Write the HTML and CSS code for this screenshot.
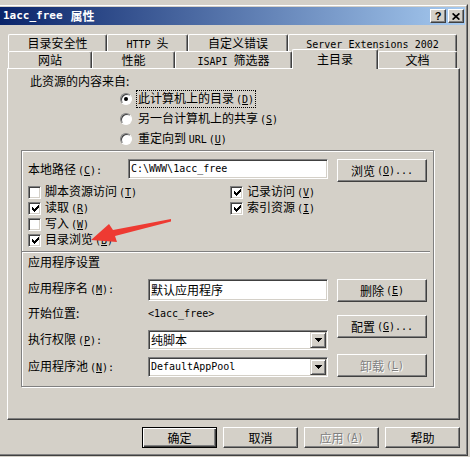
FILE: index.html
```html
<!DOCTYPE html>
<html lang="zh-CN">
<head>
<meta charset="utf-8">
<title>1acc_free 属性</title>
<link rel="stylesheet" href="styles.css">
</head>
<body>
<div class="window">
 <div class="win-in">
  <div class="titlebar">
   <div class="title"><span class="tt">1acc_free</span><span class="tcn">属性</span></div>
   <div class="tbtns">
    <div class="tbtn q">?</div>
    <div class="tbtn x"><svg width="8" height="7" viewBox="0 0 8 7"><path d="M0.6 0.4 L7.4 6.6 M7.4 0.4 L0.6 6.6" stroke="#000" stroke-width="1.7" fill="none"/></svg></div>
   </div>
  </div>

  <div class="tabs">
   <div class="tabrow back">
    <div class="tab t-sec">目录安全性</div>
    <div class="tab t-http"><span class="en">HTTP </span>头</div>
    <div class="tab t-err">自定义错误</div>
    <div class="tab t-ext"><span class="en">Server Extensions 2002</span></div>
   </div>
   <div class="tabrow front">
    <div class="tab t-site">网站</div>
    <div class="tab t-perf">性能</div>
    <div class="tab t-isapi"><span class="en">ISAPI </span>筛选器</div>
    <div class="tab t-home sel">主目录</div>
    <div class="tab t-doc">文档</div>
   </div>
  </div>

  <div class="panel">
   <div class="src">此资源的内容来自:</div>
   <div class="rrow"><span class="radio on"></span><span class="rl focus">此计算机上的目录<span class="k">(<u>D</u>)</span></span></div>
   <div class="rrow"><span class="radio"></span><span class="rl">另一台计算机上的共享<span class="k">(<u>S</u>)</span></span></div>
   <div class="rrow"><span class="radio"></span><span class="rl">重定向到 <span class="en">URL</span><span class="k">(<u>U</u>)</span></span></div>

   <div class="frame">
    <div class="pathrow">
     <div class="plbl">本地路径<span class="k">(<u>C</u>):</span></div>
     <div class="edit pedit"><span class="en">C:\WWW\1acc_free</span></div>
     <div class="btn pbtn">浏览<span class="k">(<u>O</u>)...</span></div>
    </div>

    <div class="checks">
     <div class="chk"><span class="cb"></span><span>脚本资源访问<span class="k">(<u>T</u>)</span></span></div>
     <div class="chk"><span class="cb"><svg width="7" height="7" viewBox="0 0 7 7" shape-rendering="crispEdges"><path d="M0 2h1v3H0zM1 3h1v3H1zM2 4h1v3H2zM3 3h1v3H3zM4 2h1v3H4zM5 1h1v3H5zM6 0h1v3H6z" fill="#000"/></svg></span><span>记录访问<span class="k">(<u>V</u>)</span></span></div>
     <div class="chk"><span class="cb"><svg width="7" height="7" viewBox="0 0 7 7" shape-rendering="crispEdges"><path d="M0 2h1v3H0zM1 3h1v3H1zM2 4h1v3H2zM3 3h1v3H3zM4 2h1v3H4zM5 1h1v3H5zM6 0h1v3H6z" fill="#000"/></svg></span><span>读取<span class="k">(<u>R</u>)</span></span></div>
     <div class="chk"><span class="cb"><svg width="7" height="7" viewBox="0 0 7 7" shape-rendering="crispEdges"><path d="M0 2h1v3H0zM1 3h1v3H1zM2 4h1v3H2zM3 3h1v3H3zM4 2h1v3H4zM5 1h1v3H5zM6 0h1v3H6z" fill="#000"/></svg></span><span>索引资源<span class="k">(<u>I</u>)</span></span></div>
     <div class="chk"><span class="cb"></span><span>写入<span class="k">(<u>W</u>)</span></span></div>
     <div class="chk"></div>
     <div class="chk"><span class="cb"><svg width="7" height="7" viewBox="0 0 7 7" shape-rendering="crispEdges"><path d="M0 2h1v3H0zM1 3h1v3H1zM2 4h1v3H2zM3 3h1v3H3zM4 2h1v3H4zM5 1h1v3H5zM6 0h1v3H6z" fill="#000"/></svg></span><span>目录浏览<span class="k">(<u>B</u>)</span></span></div>
     <div class="chk"></div>
    </div>

    <div class="sep"></div>
    <div class="sect">应用程序设置</div>

    <div class="app">
     <div class="appl">
      <div class="arow ra">
       <div class="albl">应用程序名<span class="k">(<u>M</u>):</span></div>
       <div class="edit aedit">默认应用程序</div>
      </div>
      <div class="arow rb">
       <div class="albl">开始位置:</div>
       <div class="aval"><span class="en">&lt;1acc_free&gt;</span></div>
      </div>
      <div class="arow rc">
       <div class="albl">执行权限<span class="k">(<u>P</u>):</span></div>
       <div class="edit sel-box"><span class="sv">纯脚本</span><span class="dd"><svg width="7" height="4" viewBox="0 0 7 4" shape-rendering="crispEdges"><path d="M0 0h7L3.5 4z" fill="#000"/></svg></span></div>
      </div>
      <div class="arow rd">
       <div class="albl">应用程序池<span class="k">(<u>N</u>):</span></div>
       <div class="edit sel-box"><span class="sv en">DefaultAppPool</span><span class="dd"><svg width="7" height="4" viewBox="0 0 7 4" shape-rendering="crispEdges"><path d="M0 0h7L3.5 4z" fill="#000"/></svg></span></div>
      </div>
     </div>
     <div class="appr">
      <div class="btn b-del">删除<span class="k">(<u>E</u>)</span></div>
      <div class="btn b-cfg">配置<span class="k">(<u>G</u>)...</span></div>
      <div class="btn b-unl dis">卸载<span class="k">(<u>L</u>)</span></div>
     </div>
    </div>
   </div>
  </div>

  <div class="dlgbtns">
   <div class="btn dbtn def">确定</div>
   <div class="btn dbtn">取消</div>
   <div class="btn dbtn dis">应用<span class="k">(<u>A</u>)</span></div>
   <div class="btn dbtn">帮助</div>
  </div>
 </div>
</div>

<svg class="arrow" width="470" height="457" viewBox="0 0 470 457">
 <polygon points="91,240 109,224 113,230 171,219 171,221.5 115,236 117,242" fill="#ee3a32"/>
</svg>
</body>
</html>
```

FILE: styles.css
```css
* { box-sizing: border-box; }
html, body { margin: 0; padding: 0; }
body {
  width: 470px;
  height: 457px;
  overflow: hidden;
  position: relative;
  background: #d4d0c8;
  font-family: "Noto Sans CJK SC", "Noto Sans", sans-serif;
  font-size: 12px;
  line-height: 16px;
  color: #000;
}
.en { font-family: "DejaVu Sans Mono", "Liberation Mono", monospace; font-size: 10px; }
.k { font-family: "DejaVu Sans Mono", "Liberation Mono", monospace; font-size: 10px; margin-left: 2px; }
u { text-decoration: underline; text-underline-offset: 1px; }

.window {
  margin: 4px 0 0 -3px;
  width: 471px;
  height: 452px;
  border: 1px solid;
  border-color: #d4d0c8 #404040 #404040 #d4d0c8;
}
.win-in {
  height: 100%;
  border: 1px solid;
  border-color: #fff #808080 #808080 #fff;
  padding: 1px;
  display: flex;
  flex-direction: column;
}

/* title bar */
.titlebar {
  height: 18px;
  flex: none;
  background: linear-gradient(to right, #0a246a, #a6caf0);
  display: flex;
  align-items: center;
  justify-content: space-between;
  padding: 0 1px 0 3px;
  color: #fff;
  font-weight: bold;
}
.title { display: flex; align-items: center; }
.tt { font-family: "DejaVu Sans Mono", "Liberation Mono", monospace; font-size: 11px; font-weight: bold; }
.tcn { margin-left: 8px; }
.tbtns { display: flex; gap: 2px; }
.tbtn {
  width: 16px;
  height: 14px;
  background: #d4d0c8;
  border: 1px solid;
  border-color: #fff #404040 #404040 #fff;
  box-shadow: inset -1px -1px 0 #808080;
  display: flex;
  align-items: center;
  justify-content: center;
  color: #000;
}
.tbtn.q { font-family: "Liberation Sans", sans-serif; font-size: 11px; font-weight: bold; line-height: 12px; }

/* tabs */
.tabs { margin: 9px 0 0 8px; width: 449px; flex: none; }
.tabrow { display: flex; height: 17px; }
.tabrow.front { align-items: flex-end; }
.tab {
  height: 17px;
  border-top: 1px solid #fff;
  border-left: 1px solid #fff;
  border-right: 1px solid #404040;
  box-shadow: inset -1px 0 0 #808080;
  border-radius: 2px 2px 0 0;
  background: #d4d0c8;
  text-align: center;
  line-height: 16px;
  white-space: nowrap;
}
.t-sec { width: 99px; }
.t-http { width: 81px; }
.t-err { width: 100px; }
.t-ext { width: 169px; }
.t-site { width: 84px; }
.t-perf { width: 83px; }
.t-isapi { width: 117px; }
.t-home { width: 86px; }
.t-doc { width: 79px; }
.tab.sel {
  height: 20px;
  margin-bottom: -1px;
  position: relative;
  z-index: 1;
  line-height: 17px;
}

/* panel */
.panel {
  flex: none;
  margin-left: 7px;
  width: 453px;
  height: 352px;
  border: 1px solid;
  border-color: #fff #404040 #404040 #fff;
  box-shadow: inset -1px -1px 0 #808080;
  padding: 4px 0 0 13px;
}
.src { margin-left: 9px; height: 16px; }
.rrow { height: 20px; display: flex; align-items: center; margin-left: 99px; }
.radio {
  width: 12px;
  height: 12px;
  border-radius: 50%;
  background: #fff;
  border: 1px solid;
  border-color: #808080 #fff #fff #808080;
  box-shadow: inset 1px 1px 0 #404040;
  margin-right: 4px;
  display: flex;
  align-items: center;
  justify-content: center;
}
.radio.on::after {
  content: "";
  width: 4px;
  height: 4px;
  border-radius: 50%;
  background: #000;
}
.rl { border: 1px solid transparent; line-height: 14px; padding: 0 1px; white-space: nowrap; }
.rl.focus { border: 1px dotted #000; }

.frame {
  margin-top: 1px;
  width: 413px;
  height: 237px;
  border: 1px solid #808080;
  box-shadow: 1px 1px 0 #fff, inset 1px 1px 0 #fff;
  padding: 8px 0 0 6px;
}
.pathrow { display: flex; height: 23px; align-items: flex-start; }
.plbl { width: 100px; line-height: 20px; white-space: nowrap; }
.edit {
  background: #fff;
  border: 1px solid;
  border-color: #808080 #fff #fff #808080;
  box-shadow: inset 1px 1px 0 #404040, inset -1px -1px 0 #d4d0c8;
  display: flex;
  align-items: center;
  padding-left: 2px;
  white-space: nowrap;
}
.pedit { width: 200px; height: 20px; }

.btn {
  background: #d4d0c8;
  border: 1px solid;
  border-color: #fff #404040 #404040 #fff;
  box-shadow: inset -1px -1px 0 #808080;
  display: flex;
  align-items: center;
  justify-content: center;
  white-space: nowrap;
}
.pbtn { width: 90px; height: 23px; margin-left: 9px; }
.btn.dis { color: #808080; text-shadow: 1px 1px 0 #fff; }

.checks {
  margin-top: 2px;
  display: grid;
  grid-template-columns: 202px 190px;
  grid-auto-rows: 16px;
}
.chk { display: flex; align-items: center; white-space: nowrap; }
.cb {
  width: 13px;
  height: 13px;
  flex: none;
  background: #fff;
  border: 1px solid;
  border-color: #808080 #fff #fff #808080;
  box-shadow: inset 1px 1px 0 #404040, inset -1px -1px 0 #d4d0c8;
  margin-right: 4px;
  display: flex;
  align-items: center;
  justify-content: center;
}
.cb svg { display: block; margin: 1px 0 0 1px; }

.sep {
  margin: 3px 0 0 -6px;
  width: 408px;
  height: 2px;
  border-top: 1px solid #808080;
  border-bottom: 1px solid #fff;
}
.sect { margin-top: 1px; height: 16px; }

.app { display: flex; }
.appl { width: 300px; }
.arow { display: flex; align-items: center; }
.albl { width: 120px; white-space: nowrap; }
.ra { margin-top: 9px; height: 22px; align-items: flex-start; }
.ra .albl { line-height: 18px; }
.aedit { width: 180px; height: 22px; }
.rb { margin-top: 4px; height: 16px; }
.rc { margin-top: 9px; height: 20px; }
.rd { margin-top: 7px; height: 20px; }
.sel-box { width: 180px; height: 20px; padding: 1px 1px 1px 2px; justify-content: space-between; }
.dd {
  width: 16px;
  height: 16px;
  background: #d4d0c8;
  border: 1px solid;
  border-color: #d4d0c8 #404040 #404040 #d4d0c8;
  box-shadow: inset 1px 1px 0 #fff, inset -1px -1px 0 #808080;
  display: flex;
  align-items: center;
  justify-content: center;
}
.appr { margin-left: 9px; display: flex; flex-direction: column; }
.appr .btn { width: 90px; height: 23px; }
.b-del { margin-top: 9px; }
.b-cfg { margin-top: 13px; }
.b-unl { margin-top: 16px; }

.dlgbtns {
  flex: none;
  margin-top: 7px;
  display: flex;
  justify-content: flex-end;
  gap: 6px;
  padding-right: 5px;
}
.dbtn { width: 75px; height: 21px; }
.dbtn.def {
  border: 1px solid #000;
  box-shadow: inset 1px 1px 0 #fff, inset -1px -1px 0 #404040, inset -2px -2px 0 #808080;
}

.arrow { position: absolute; left: 0; top: 0; pointer-events: none; }
```
